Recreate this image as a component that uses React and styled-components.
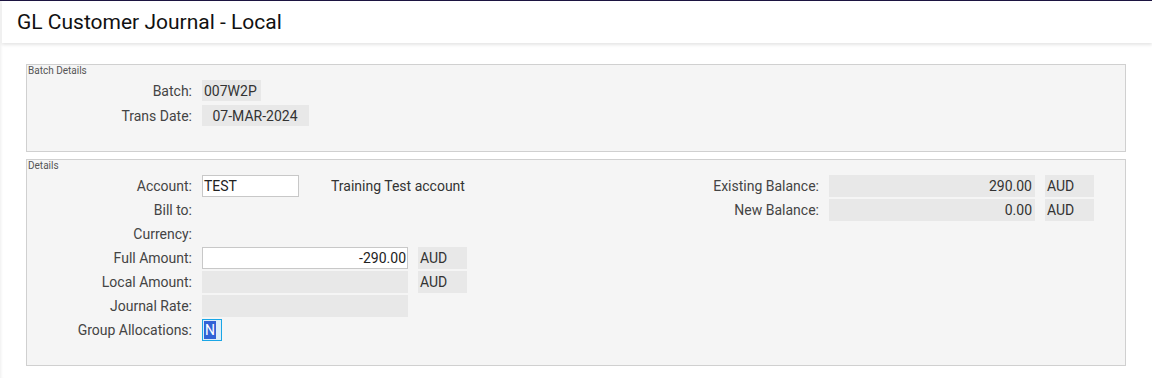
import React from 'react'
import styled, { createGlobalStyle } from 'styled-components'

const GlobalStyle = createGlobalStyle`
    body {
        margin: 0;
        background: #fff;
        font-family: Roboto, "Liberation Sans", sans-serif;
        color: #333;
    }
`

const Shell = styled.div`
    border-top: 1px solid #1d1542;
    min-height: 377px;
    box-shadow: inset 3px 0 3px -2px rgba(0,0,0,0.07);
`

const Header = styled.header`
    height: 42px;
    display: flex;
    align-items: center;
    padding-left: 15px;
    margin-left: 2px;
    background: #fff;
    box-shadow: 0 2px 3px rgba(0,0,0,0.1);
    font-size: 21px;
    color: #111;
`

const Content = styled.main`
    display: flex;
    flex-direction: column;
    gap: 7px;
    padding: 21px 26px 12px 26px;
`

const Panel = styled.section`
    background: #f5f5f5;
    border: 1px solid #d0d0d0;
    padding-bottom: ${p => p.$bottom || 24}px;
`

const PanelTitle = styled.div`
    font-size: 10px;
    line-height: 12px;
    color: #555;
    padding-left: 1px;
    margin-bottom: 3px;
`

const Columns = styled.div`
    display: flex;
    justify-content: space-between;
    padding-right: 31px;
`

const Stack = styled.div`
    display: flex;
    flex-direction: column;
    gap: ${p => p.$gap || 2}px;
`

const Row = styled.div`
    display: flex;
    align-items: center;
    gap: 10px;
    height: ${p => p.$h || 22}px;
`

const Label = styled.span`
    width: ${p => p.$w || 165}px;
    text-align: right;
    font-size: 14px;
    color: #444;
    white-space: nowrap;
`

const ReadOnly = styled.div`
    box-sizing: border-box;
    width: ${p => p.$w}px;
    height: 100%;
    background: #e8e8e8;
    font-size: 14px;
    color: #333;
    display: flex;
    align-items: center;
    justify-content: ${p => p.$align === 'right' ? 'flex-end' : p.$align === 'center' ? 'center' : 'flex-start'};
    padding: 0 3px 0 2px;
`

const Field = styled.div`
    box-sizing: border-box;
    width: ${p => p.$w}px;
    height: 100%;
    background: #fff;
    border: 1px solid #c8c8c8;
    font-size: 14px;
    color: #222;
    display: flex;
    align-items: center;
    justify-content: ${p => p.$align === 'right' ? 'flex-end' : 'flex-start'};
    padding: 0 1px;
`

const FocusField = styled(Field)`
    border-color: #1aa6e6;
    background: #dcedf8;
`

const Selection = styled.span`
    background: #3162d6;
    color: #fff;
    line-height: 18px;
    padding: 0 1px;
`

const Note = styled.span`
    font-size: 14px;
    color: #333;
    margin-left: 22px;
`

export default function App() {
    return (
        <>
            <GlobalStyle />
            <Shell>
                <Header>GL Customer Journal - Local</Header>
                <Content>
                    <Panel $bottom={25}>
                        <PanelTitle>Batch Details</PanelTitle>
                        <Stack $gap={4}>
                            <Row $h={21}>
                                <Label>Batch:</Label>
                                <ReadOnly $w={59}>007W2P</ReadOnly>
                            </Row>
                            <Row $h={21}>
                                <Label>Trans Date:</Label>
                                <ReadOnly $w={107} $align="center">07-MAR-2024</ReadOnly>
                            </Row>
                        </Stack>
                    </Panel>

                    <Panel $bottom={24}>
                        <PanelTitle>Details</PanelTitle>
                        <Columns>
                            <Stack>
                                <Row>
                                    <Label>Account:</Label>
                                    <Field $w={97}>TEST</Field>
                                    <Note>Training Test account</Note>
                                </Row>
                                <Row><Label>Bill to:</Label></Row>
                                <Row><Label>Currency:</Label></Row>
                                <Row>
                                    <Label>Full Amount:</Label>
                                    <Field $w={206} $align="right">-290.00</Field>
                                    <ReadOnly $w={49}>AUD</ReadOnly>
                                </Row>
                                <Row>
                                    <Label>Local Amount:</Label>
                                    <ReadOnly $w={206} />
                                    <ReadOnly $w={49}>AUD</ReadOnly>
                                </Row>
                                <Row>
                                    <Label>Journal Rate:</Label>
                                    <ReadOnly $w={206} />
                                </Row>
                                <Row>
                                    <Label>Group Allocations:</Label>
                                    <FocusField $w={20}><Selection>N</Selection></FocusField>
                                </Row>
                            </Stack>
                            <Stack>
                                <Row>
                                    <Label $w={120}>Existing Balance:</Label>
                                    <ReadOnly $w={206} $align="right">290.00</ReadOnly>
                                    <ReadOnly $w={49}>AUD</ReadOnly>
                                </Row>
                                <Row>
                                    <Label $w={120}>New Balance:</Label>
                                    <ReadOnly $w={206} $align="right">0.00</ReadOnly>
                                    <ReadOnly $w={49}>AUD</ReadOnly>
                                </Row>
                            </Stack>
                        </Columns>
                    </Panel>
                </Content>
            </Shell>
        </>
    )
}
